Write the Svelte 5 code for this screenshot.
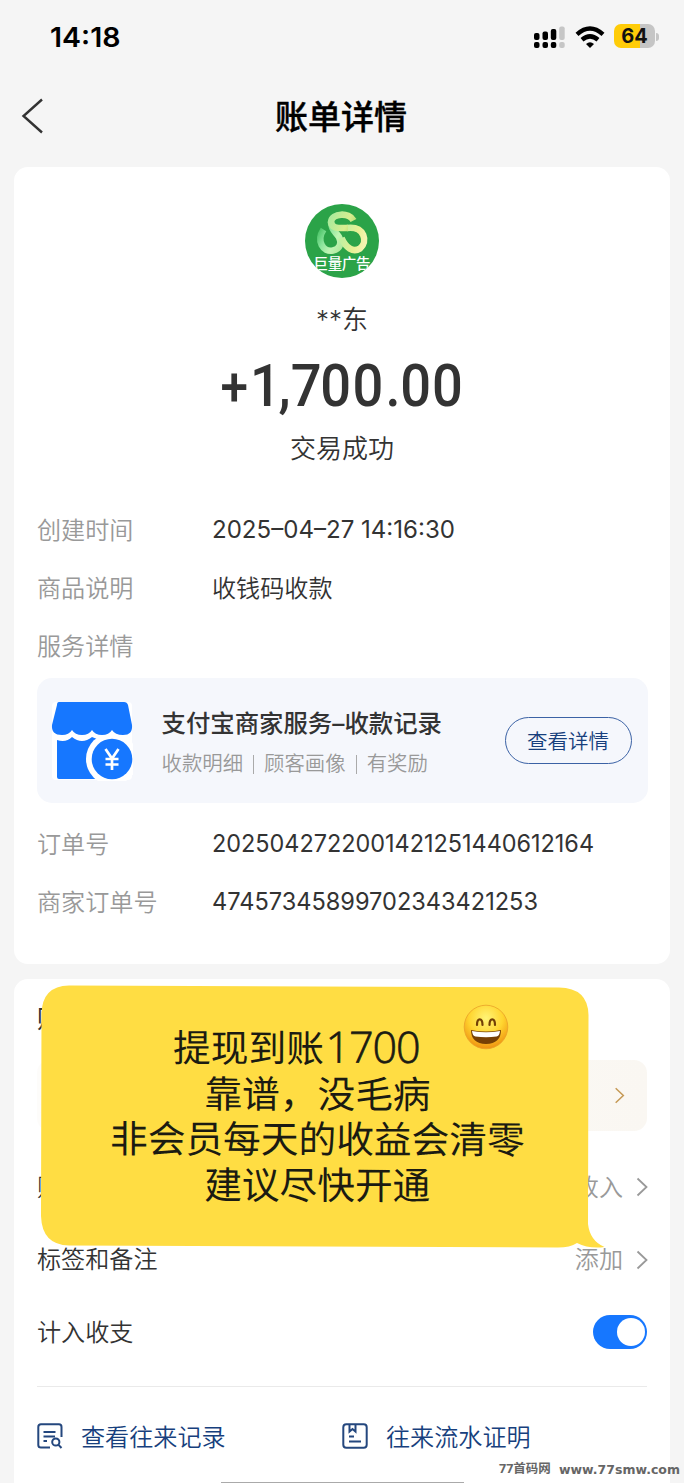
<script>
  const details = [
    { label: '创建时间', value: '2025–04–27 14:16:30', w: 243 },
    { label: '商品说明', value: '收钱码收款' },
    { label: '服务详情', value: '' }
  ];
  const orders = [
    { label: '订单号', value: '2025042722001421251440612164', w: 382 },
    { label: '商家订单号', value: '47457345899702343421253', w: 326 }
  ];
</script>

{#snippet row(item)}
  <div class="row">
    <span class="label">{item.label}</span>
    {#if item.w}
      <svg class="num" width={item.w} height="34"><text x="0" y="24" textLength={item.w} lengthAdjust="spacingAndGlyphs">{item.value}</text></svg>
    {:else}
      <span>{item.value}</span>
    {/if}
  </div>
{/snippet}

{#snippet chevron(cls)}
  <svg class={cls} width="12" height="20" viewBox="0 0 12 20"><path d="M1.5 1.5 10.5 10 1.5 18.500" /></svg>
{/snippet}

<div class="page">
  <header class="status">
    <svg class="clock" width="80" height="34"><text x="0" y="26.500" textLength="70.500" lengthAdjust="spacingAndGlyphs">14:18</text></svg>
    <div class="indicators">
      <svg width="32" height="24" viewBox="0 0 32 24">
        <g fill="#000">
          <rect x="1" y="8" width="5.500" height="7" rx="2" /><rect x="9.500" y="6.500" width="5.500" height="8.500" rx="2" /><rect x="17.800" y="4" width="5.500" height="11" rx="2" />
          <rect x="1" y="17" width="5.500" height="6" rx="2" /><rect x="9.500" y="17" width="5.500" height="6" rx="2" /><rect x="17.800" y="17" width="5.500" height="6" rx="2" />
        </g>
        <g fill="#c6c6c6"><rect x="26.200" y="1.500" width="5.500" height="13.500" rx="2" /><rect x="26.200" y="17" width="5.500" height="6" rx="2" /></g>
      </svg>
      <svg class="wifi" width="30" height="22" viewBox="0 0 30 22">
        <g fill="none" stroke="#000" stroke-width="4.4">
          <path d="M2 8.300Q15-3.300 28 8.300" /><path d="M7 13.800Q15 7 23 13.800" />
        </g>
        <path d="M11 18Q15 14.400 19 18L15 22Z" />
      </svg>
      <div class="battery"><span>64</span></div>
      <i class="tip"></i>
    </div>
  </header>

  <nav>
    <svg class="back" width="24" height="36" viewBox="0 0 24 36"><path d="M22 1.500 3.500 18 22 34.500" /></svg>
    <h1>账单详情</h1>
  </nav>

  <section class="card summary">
    <svg class="logo" width="74" height="74" viewBox="0 0 74 74">
      <defs>
        <linearGradient id="leftArm" gradientUnits="userSpaceOnUse" x1="14" y1="26" x2="38" y2="40"><stop offset="0" stop-color="#4cc468" /><stop offset=".35" stop-color="#8be59c" /><stop offset=".7" stop-color="#c0f5b4" /><stop offset="1" stop-color="#b4eba0" /></linearGradient>
        <linearGradient id="topArm" gradientUnits="userSpaceOnUse" x1="24" y1="10" x2="50" y2="22"><stop offset="0" stop-color="#a5ea9c" /><stop offset=".7" stop-color="#d9ee90" /><stop offset="1" stop-color="#b5dd72" /></linearGradient>
        <linearGradient id="rightArm" gradientUnits="userSpaceOnUse" x1="38" y1="30" x2="60" y2="36"><stop offset="0" stop-color="#c3f0a0" /><stop offset=".6" stop-color="#e8f094" /><stop offset="1" stop-color="#f4f3b0" /></linearGradient>
        <clipPath id="disc"><circle cx="37" cy="37" r="37" /></clipPath>
      </defs>
      <g clip-path="url(#disc)">
        <rect width="74" height="74" fill="#2ba348" />
        <g fill="none" stroke-width="6.600">
          <path d="M18.500 25.500C11 37 18 48.500 28 46.500C35 45 37 39 34 33C31 28 26 26 26 18" stroke="url(#leftArm)" />
          <path d="M42 24C60 22 63 38 55 44.500C48 49 41 44 36.500 34" stroke="url(#rightArm)" />
          <path d="M48.500 16.500C44 8 27 9 26 18C26.500 25 34 24 43 24" stroke="url(#topArm)" />
        </g>
        <text x="37" y="65" text-anchor="middle" textLength="57">巨量广告</text>
      </g>
    </svg>
    <div class="name">**东</div>
    <svg class="amount" width="260" height="70">
      <g transform="translate(8 0) scale(.92 1)">
        <text y="54"><tspan class="plus" x="0.500" dy="-1">+</tspan><tspan dy="1" x="32.500 63.500 77 109 144 180 196 230.500">1,700.00</tspan></text>
      </g>
    </svg>
    <div class="state">交易成功</div>

    <div class="rows">{#each details as d}{@render row(d)}{/each}</div>

    <div class="service">
      <svg width="82" height="80" viewBox="0 0 82 80">
        <rect x="1" y="1" width="80" height="78" rx="4" fill="#fff" />
        <path fill="#1677ff" d="M6 39Q15 42 21 36Q31 44 41 36L46 38V78H8Q6 78 6 76Z" />
        <circle cx="61" cy="58" r="26" fill="#fff" />
        <path fill="#1677ff" d="M8 1H73Q76 1 77 4L81 24Q82 34 72 34Q64 34 61 29Q58 34 51 34Q44 34 41 29Q38 34 31 34Q24 34 21 29Q18 34 11 34Q0 34 1 24L6 4Q6 1 8 1Z" />
        <circle cx="61" cy="58" r="20.300" fill="#1677ff" />
        <path d="M54.500 48 61 57.500 67.500 48M61 57V69M54.500 58H67.500M54.500 63.500H67.500" fill="none" stroke="#fff" stroke-width="2.700" />
      </svg>
      <div class="copy">
        <strong>支付宝商家服务–收款记录</strong>
        <div class="sub">收款明细<i></i>顾客画像<i></i>有奖励</div>
      </div>
      <button>查看详情</button>
    </div>

    <div class="rows">{#each orders as o}{@render row(o)}{/each}</div>
  </section>

  <section class="card manage">
    <h2>账单管理</h2>
    <div class="promo">{@render chevron('gold')}</div>
    <div class="line"><span>账单分类</span><span class="val">收入{@render chevron('grey')}</span></div>
    <div class="line"><span>标签和备注</span><span class="val">添加{@render chevron('grey')}</span></div>
    <div class="line"><span>计入收支</span><span class="toggle"></span></div>
    <hr />
    <div class="links">
      <span>
        <svg width="26" height="26" viewBox="0 0 26 26">
          <path d="M13 24.500H4Q1.300 24.500 1.300 22V4Q1.300 1.300 4 1.300H22Q24.500 1.300 24.500 4V14M6.500 9H18.500M6.500 13.500H18M6.500 18H10" />
          <circle cx="18.800" cy="19" r="3.600" /><path d="M21.300 21.600 24.500 25" />
        </svg>
        查看往来记录
      </span>
      <span>
        <svg width="26" height="26" viewBox="0 0 26 26">
          <rect x="1.300" y="1.300" width="23.400" height="23.400" rx="3" /><path d="M7.500 1.500V8.500L10.500 6 13.500 8.500V1.500M7 13.500H12M7 18.500H19" />
        </svg>
        往来流水证明
      </span>
    </div>
  </section>

  <div class="bubble">
    <svg class="shape" width="566" height="266" viewBox="0 0 566 266">
      <path fill="#ffdd43" d="M29 1.500L519 3.500Q548 4 548.500 31L548 240Q550 257 564.500 263Q549 265 537 259Q530 263.500 518 263.500L29 261.500Q2 261 1 232L1.500 30Q2 2 29 1.500Z" />
    </svg>
    <div class="words">
      <p class="first"><span>提现到账</span><svg width="97" height="46"><text x="1.500" y="39.500" textLength="95">1700</text></svg></p>
      <p>靠谱，没毛病</p>
      <p>非会员每天的收益会清零</p>
      <p>建议尽快开通</p>
    </div>
    <svg class="emoji" width="46" height="46" viewBox="0 0 46 46">
      <defs>
        <radialGradient id="face" cx=".5" cy=".3" r=".7"><stop offset="0" stop-color="#fff477" /><stop offset=".55" stop-color="#ffd52f" /><stop offset="1" stop-color="#ef9110" /></radialGradient>
      </defs>
      <circle cx="23" cy="23" r="21.800" fill="url(#face)" stroke="#eaa12a" stroke-width=".8" />
      <path d="M14 21C14 13.500 19.500 13.500 19.500 21M26.500 21C26.500 13.500 32 13.500 32 21" fill="none" stroke="#724006" stroke-width="2.200" stroke-linecap="round" />
      <path d="M8 26Q23 29 38 26Q38 39.500 23 40Q8 39.500 8 26Z" fill="#774005" />
      <path d="M9 27Q23 29.500 37 27Q36.500 32 33.500 32.500Q23 34 12.500 32.500Q9.500 32 9 27Z" fill="#fff" />
    </svg>
  </div>

  <div class="home"></div>
  <div class="mark"><span>77首码网</span><svg width="124" height="20"><text x="0" y="14.500" textLength="121" lengthAdjust="spacingAndGlyphs">www.77smw.com</text></svg></div>
</div>

<style>
  :global(body) { margin: 0; background: #f5f5f5; }
  .page {
    position: relative; width: 684px; height: 1483px; overflow: hidden; box-sizing: border-box;
    background: #f5f5f5; color: #333; font: 350 24.1px/34px Inter, "Noto Sans CJK SC", sans-serif;
  }
  svg { display: block; flex: none; }
  .status { height: 74px; box-sizing: border-box; padding: 0 25px 0 50px; display: flex; align-items: center; justify-content: space-between; }
  .clock { font: 600 27px Inter, sans-serif; fill: #000; }
  .indicators { display: flex; align-items: center; }
  .wifi { margin: 0 9px 0 10px; }
  .battery { width: 41px; height: 24px; margin-top: -2px; border-radius: 7px; background: linear-gradient(90deg, #ffcc08 64%, #c5c5c5 64%); font: 700 20px/25px Inter, sans-serif; color: #111; text-align: center; }
  .tip { width: 3px; height: 8px; border-radius: 0 3px 3px 0; background: #c5c5c5; margin: -1px 0 0 1px; }
  nav { height: 93px; box-sizing: border-box; padding: 0 22px 9px 20px; display: grid; grid-template-columns: 24px 1fr 24px; align-items: center; }
  .back { fill: none; stroke: #333; stroke-width: 2.4; }
  h1 { margin: 1px 0 0; color: #000; font-size: 33px; line-height: 40px; font-weight: 500; -webkit-text-stroke: .4px #000; text-align: center; }
  .card { margin: 0 14px; padding: 0 23px; border-radius: 14px; background: #fff; }
  .summary { box-sizing: border-box; height: 797px; display: flex; flex-direction: column; align-items: center; padding-top: 37px; }
  .logo text { font: 500 14.5px "Noto Sans CJK SC", sans-serif; fill: #fff; }
  .name { margin-top: 25px; font-size: 26px; }
  .amount { margin-top: 15px; font: 500 59px Roboto, sans-serif; fill: #333; }
  .plus { font-size: 54px; }
  .state { margin-top: 10px; font-size: 26px; }
  .rows { width: 100%; margin-top: 36px; }
  .row { height: 58px; display: grid; grid-template-columns: 175px 1fr; align-items: center; }
  .row span { margin-top: -1px; }
  .label { color: #999; }
  .num { font: 400 24.3px Inter, sans-serif; fill: #333; overflow: visible; }
  .service { width: 611px; height: 125px; box-sizing: border-box; padding: 0 16px 0 14px; margin-top: 2px; border-radius: 15px; background: #f5f7fc; display: flex; align-items: center; }
  .service + .rows { margin-top: 13px; }
  .copy { flex: 1; margin-left: 29px; padding-top: 4px; white-space: nowrap; }
  .copy strong { display: block; font-weight: 500; font-size: 24.4px; line-height: 38px; margin-top: 2px; }
  .sub { display: flex; align-items: center; margin-top: 3px; font-size: 20.4px; line-height: 38px; color: #999; }
  .sub i { width: 1px; height: 19px; margin: 0 10px; background: #aaa; }
  button { width: 127px; height: 47px; padding: 0; border: 1px solid #3b62a5; border-radius: 24px; background: none; color: #173f7d; font: 350 20.5px/43px "Noto Sans CJK SC", sans-serif; }
  .manage { margin-top: 15px; height: 530px; padding-top: 20px; }
  h2 { margin: 0 0 21px; font-size: 25px; line-height: 40px; font-weight: 500; }
  .promo { height: 71px; border-radius: 13px; background: linear-gradient(90deg, #fdfcfa, #faf7f2); display: flex; align-items: center; justify-content: flex-end; padding-right: 22px; margin-bottom: 20px; }
  .gold, .grey { fill: none; stroke-width: 1.8; }
  .gold { stroke: #c59955; width: 11px; height: 17px; }
  .grey { stroke: #999; margin: -1px -1px 0 13px; }
  .line { height: 72.5px; display: flex; align-items: center; justify-content: space-between; }
  .line > span { padding-top: 1px; }
  .val { display: flex; align-items: center; color: #999; }
  .line > .toggle { padding: 0; width: 54px; height: 34px; border-radius: 17px; background: #1677ff; display: flex; justify-content: flex-end; align-items: center; }
  .toggle::after { content: ""; width: 28px; height: 28px; margin-right: 2px; border-radius: 50%; background: #fff; }
  hr { margin: 17px 0 0; border: 0; height: 1px; background: #eaeaea; }
  .links { display: grid; grid-template-columns: 1fr 1fr; margin-top: 34px; color: #173f7d; }
  .links span { display: flex; align-items: center; gap: 18px; }
  .links svg { fill: none; stroke: #24477e; stroke-width: 2; margin-top: -3px; }
  .bubble { position: absolute; left: 40px; top: 984px; width: 566px; height: 266px; }
  .shape { position: absolute; inset: 0; }
  .words { position: relative; width: 415px; margin-left: 70px; padding-top: 39px; transform: rotate(.15deg); color: #1b1b12; font-size: 37.7px; font-weight: 400; text-align: center; white-space: nowrap; }
  .words p { margin: 0; height: 45.7px; line-height: 45.7px; font-family: "Noto Sans CJK SC", sans-serif; }
  .words .first { display: flex; padding-left: 63px; }
  .first svg { font: 300 43px "Open Sans", sans-serif; fill: #1b1b12; stroke: #1b1b12; stroke-width: .7; overflow: visible; }
  .emoji { position: absolute; left: 423px; top: 20px; }
  .home { position: absolute; left: 221px; bottom: 0; width: 243px; height: 1px; background: #aaa; }
  .mark { position: absolute; left: 499px; top: 1459px; display: flex; gap: 6px; color: #666; font: 700 12.500px/20px "Open Sans", "Noto Sans CJK SC", sans-serif; }
  .mark span { width: 54px; white-space: nowrap; }
  .mark svg { fill: #666; font: 700 12.500px "DejaVu Sans", sans-serif; }
</style>
